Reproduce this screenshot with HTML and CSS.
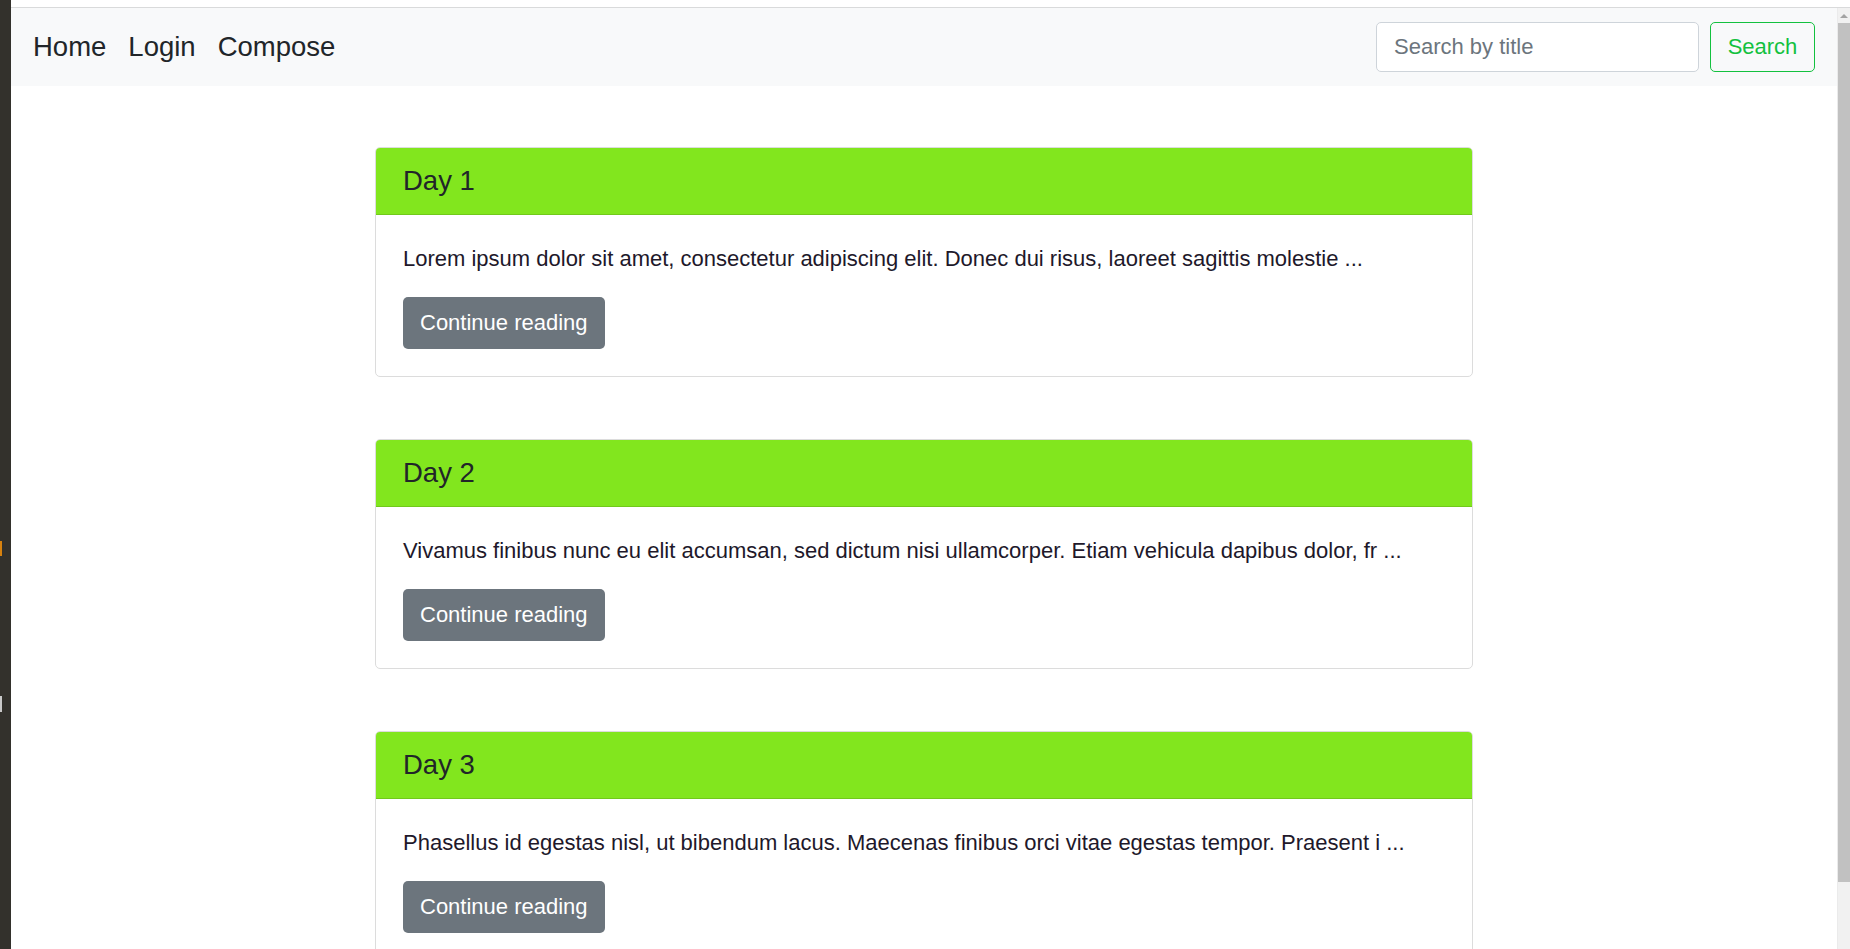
FILE: index.html
```html
<!DOCTYPE html>
<html lang="en">
<head>
<meta charset="utf-8">
<title>Daily Journal</title>
<link rel="stylesheet" href="styles.css">
</head>
<body>
<div class="frame">
  <div class="strip">
    <span class="mark mark-orange"></span>
    <span class="mark mark-white"></span>
  </div>
  <div class="window">
    <div class="topline"></div>
    <div class="viewport">
      <div class="page">
        <nav class="navbar">
          <div class="nav-links">
            <a class="nav-link" href="#">Home</a>
            <a class="nav-link" href="#">Login</a>
            <a class="nav-link" href="#">Compose</a>
          </div>
          <form class="search-form">
            <input class="search-input" type="text" placeholder="Search by title">
            <button class="search-btn" type="button">Search</button>
          </form>
        </nav>
        <main class="posts">
          <article class="card">
            <div class="card-header">Day 1</div>
            <div class="card-body">
              <p class="card-text">Lorem ipsum dolor sit amet, consectetur adipiscing elit. Donec dui risus, laoreet sagittis molestie ...</p>
              <a class="btn-read" href="#">Continue reading</a>
            </div>
          </article>
          <article class="card">
            <div class="card-header">Day 2</div>
            <div class="card-body">
              <p class="card-text">Vivamus finibus nunc eu elit accumsan, sed dictum nisi ullamcorper. Etiam vehicula dapibus dolor, fr ...</p>
              <a class="btn-read" href="#">Continue reading</a>
            </div>
          </article>
          <article class="card">
            <div class="card-header">Day 3</div>
            <div class="card-body">
              <p class="card-text">Phasellus id egestas nisl, ut bibendum lacus. Maecenas finibus orci vitae egestas tempor. Praesent i ...</p>
              <a class="btn-read" href="#">Continue reading</a>
            </div>
          </article>
        </main>
      </div>
      <div class="scrollbar">
        <div class="scroll-arrow"></div>
        <div class="scroll-thumb"></div>
      </div>
    </div>
  </div>
</div>
</body>
</html>
```
FILE: styles.css
```css
* { box-sizing: border-box; }

html, body {
  margin: 0;
  padding: 0;
  height: 949px;
  overflow: hidden;
  background: #ffffff;
  font-family: "Liberation Sans", Arial, sans-serif;
  color: #212529;
}

.frame {
  display: flex;
  height: 949px;
}

.strip {
  width: 11px;
  flex: none;
  background: #33312c;
  display: flex;
  flex-direction: column;
}

.mark {
  display: block;
  width: 2px;
}

.mark-orange {
  margin-top: 541px;
  height: 15px;
  background: #d7820f;
}

.mark-white {
  margin-top: 140px;
  height: 16px;
  background: #c9c9c9;
}

.window {
  flex: 1;
  display: flex;
  flex-direction: column;
  min-width: 0;
}

.topline {
  height: 8px;
  flex: none;
  background: #ffffff;
  border-bottom: 1px solid #d9dadb;
}

.viewport {
  flex: 1;
  display: flex;
  min-height: 0;
}

.page {
  flex: 1;
  min-width: 0;
  overflow: hidden;
}

.navbar {
  height: 78px;
  background: #f8f9fa;
  display: flex;
  align-items: center;
  justify-content: space-between;
  padding: 0 22px 0 22px;
}

.nav-links {
  display: flex;
  gap: 22px;
}

.nav-link {
  font-size: 27.5px;
  color: #212529;
  text-decoration: none;
  line-height: 32px;
}

.search-form {
  display: flex;
  gap: 11px;
  margin: 0;
}

.search-input {
  width: 323px;
  height: 50px;
  border: 1px solid #ced4da;
  border-radius: 5px;
  background: #ffffff;
  padding: 0 17px;
  font-family: "Liberation Sans", Arial, sans-serif;
  font-size: 22px;
  color: #495057;
  outline: none;
}

.search-input::placeholder {
  color: #6c757d;
  opacity: 1;
}

.search-btn {
  height: 50px;
  width: 105px;
  border: 1px solid #13c13f;
  border-radius: 5px;
  background: transparent;
  color: #13c13f;
  font-family: "Liberation Sans", Arial, sans-serif;
  font-size: 22px;
  padding: 0;
}

.posts {
  width: 1098px;
  margin: 0 auto;
  padding-top: 61px;
  display: flex;
  flex-direction: column;
  gap: 62px;
}

.card {
  border: 1px solid #dcdcdc;
  border-radius: 5px;
  overflow: hidden;
  background: #ffffff;
  flex: none;
}

.card-header {
  height: 67px;
  background: #82e61e;
  border-bottom: 1px solid #71c91b;
  padding: 0 27px;
  font-size: 27.5px;
  display: flex;
  align-items: center;
  color: #212529;
}

.card-body {
  padding: 28px 27px 27px;
}

.card-text {
  margin: 0 0 22px;
  font-size: 22px;
  line-height: 32px;
  color: #21182a;
}

.btn-read {
  display: inline-flex;
  align-items: center;
  height: 52px;
  padding: 0 17px;
  background: #6c757d;
  color: #ffffff;
  border-radius: 5px;
  font-size: 22px;
  text-decoration: none;
}

.scrollbar {
  width: 13px;
  flex: none;
  background: #f1f1f1;
  border-left: 1px solid #ebebeb;
  display: flex;
  flex-direction: column;
  align-items: center;
}

.scroll-arrow {
  margin-top: 6px;
  width: 0;
  height: 0;
  border-left: 4px solid transparent;
  border-right: 4px solid transparent;
  border-bottom: 4px solid #a3a3a3;
}

.scroll-thumb {
  margin-top: 5px;
  width: 12px;
  height: 859px;
  background: #c1c1c1;
}
```
